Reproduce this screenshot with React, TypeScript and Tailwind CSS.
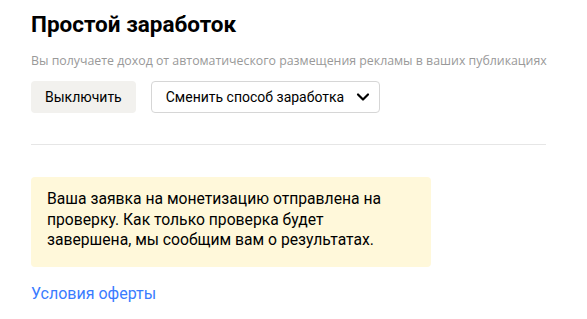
import React from 'react';

const Chevron: React.FC = () => (
  <svg width="16" height="16" viewBox="0 0 16 16" fill="none" className="shrink-0">
    <path d="M3 5.5L8 10.5L13 5.5" stroke="#000" strokeWidth="2.2" strokeLinecap="round" strokeLinejoin="round" />
  </svg>
);

const App: React.FC = () => {
  return (
    <div className="min-h-[319px] w-[587px] bg-white font-['Roboto',sans-serif] text-black">
      <div className="ml-[31px] flex w-[515px] flex-col pt-[10px]">
        <h1 className="text-[22.5px] leading-[28px] font-bold">Простой заработок</h1>
        <p className="mt-[15px] whitespace-nowrap font-['Open_Sans',sans-serif] text-[12.35px] leading-[16px] text-[#999]">
          Вы получаете доход от автоматического размещения рекламы в ваших публикациях
        </p>
        <div className="mt-[12px] flex gap-[15px]">
          <button className="h-[32px] rounded-[4px] bg-[#f2f1ee] px-[14px] text-[14px] leading-[32px]">Выключить</button>
          <button className="flex h-[32px] items-center gap-[11px] rounded-[4px] border border-[#d6d6d6] pl-[14px] pr-[8px] text-[14px]">
            Сменить способ заработка
            <Chevron />
          </button>
        </div>
        <div className="mt-[31px] h-px bg-[#e6e6e6]" />
        <div className="mt-[32px] w-[400px] rounded-[4px] bg-[#fff8da] pt-[12px] pr-[40px] pb-[16px] pl-[16px] text-[15.7px] leading-[20.5px]">
          Ваша заявка на монетизацию отправлена на проверку. Как только проверка будет завершена, мы сообщим вам о результатах.
        </div>
        <a href="#" className="mt-[17px] text-[16px] leading-[20px] text-[#3a7cff]">Условия оферты</a>
      </div>
    </div>
  );
};

export default App;
